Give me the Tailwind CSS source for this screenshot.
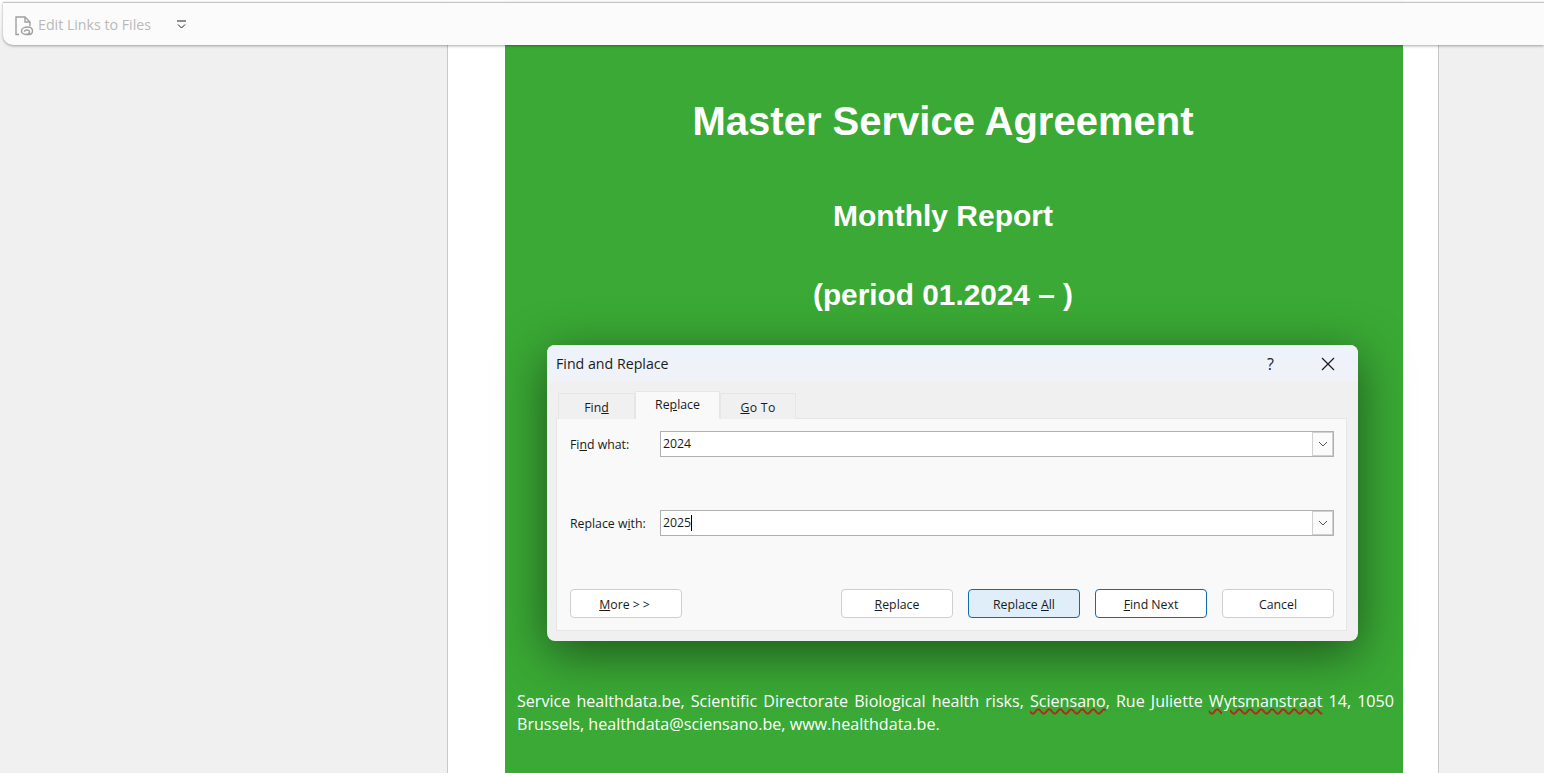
<!DOCTYPE html>
<html lang="en">
<head>
    <meta charset="UTF-8">
    <title>Find and Replace</title>
    <script src="https://cdn.jsdelivr.net/npm/@tailwindcss/browser@4"></script>
</head>
<body class="bg-[#f0f0f0] overflow-hidden font-['Open_Sans',sans-serif]">
    <div class="relative h-[773px] w-[1544px] overflow-hidden">
        <!-- Document page -->
        <div class="absolute left-[447px] top-0 h-full w-[992px] bg-white border-x border-[#c8c8c8]">
            <div class="ml-[57px] w-[898px] h-full bg-[#3aa935] pt-[45px] pr-[22px]">
                <div class="font-['Liberation_Sans',sans-serif] font-bold text-white text-center">
                    <h1 class="text-[40px] leading-[46px] mt-[53px]">Master Service Agreement</h1>
                    <h2 class="text-[30px] leading-[34px] mt-[55px]">Monthly Report</h2>
                    <h2 class="text-[29.8px] leading-[34px] mt-[45px]">(period 01.2024 – )</h2>
                </div>
                <p class="mt-[378px] ml-[12px] mr-[-13px] text-white text-[16.1px] leading-[23px] text-justify">
                    Service healthdata.be, Scientific Directorate Biological health risks, <span class="underline decoration-wavy decoration-[#b8281a] decoration-[1.5px]">Sciensano</span>, Rue Juliette <span class="underline decoration-wavy decoration-[#b8281a] decoration-[1.5px]">Wytsmanstraat</span> 14, 1050 Brussels, healthdata@sciensano.be, www.healthdata.be.
                </p>
            </div>
        </div>

        <!-- Toolbar -->
        <div class="absolute left-0 top-0 w-full pt-[2px] bg-gradient-to-b from-white to-white/0">
            <div class="h-[43px] ml-[3px] bg-[#fbfbfb] border-t border-[#c4c4c4] rounded-bl-[10px] shadow-[0_1px_3px_rgba(0,0,0,0.35)] flex items-center pl-[12px]">
                <svg class="w-[19px] h-[20px] mt-[3px]" viewBox="0 0 19 20" fill="none" stroke="#a0a0a0" stroke-width="1.4">
                    <path d="M4 18.500H1V1H10L15 6V10"/>
                    <path d="M10 1V6H15"/>
                    <path d="M10 18.500h3.500c2.500 0 4-1.500 4-3.500 0-2.500-2-4-5-4-3 0-6 1.500-6 4 0 2 2 3.500 4.500 3.500 2 0 3.500-1 3.500-2.500 0-1.200-1-2-2.500-2-1.500 0-2.500.8-2.500 1.800"/>
                </svg>
                <span class="ml-[4px] pt-[1px] text-[14.2px] text-[#b9b9b9]">Edit Links to Files</span>
                <svg class="ml-[25px] w-[11px] h-[10px] mt-[1px]" viewBox="0 0 11 10" fill="none" stroke="#222" stroke-width="1">
                    <path d="M1 1H10"/>
                    <path d="M2 4.500L5.500 8L9 4.500"/>
                </svg>
            </div>
        </div>

        <!-- Find and Replace dialog -->
        <div class="absolute left-[547px] top-[345px] w-[811px] h-[296px] bg-[#f0f0f0] rounded-[8px] shadow-[0_12px_50px_rgba(0,0,0,0.5)] flex flex-col text-[12.3px] text-[#1a1a1a]">
            <div class="h-[37px] shrink-0 rounded-t-[8px] bg-gradient-to-b from-[#eef2fb] to-[#f0f2f8] flex items-center pl-[9px]">
                <span class="text-[14.2px] grow">Find and Replace</span>
                <span class="text-[16px] mr-[47px]">?</span>
                <svg class="w-[14px] h-[14px] mr-[23px]" viewBox="0 0 14 14" fill="none" stroke="#1a1a1a" stroke-width="1.2">
                    <path d="M1 1L13 13M13 1L1 13"/>
                </svg>
            </div>

            <!-- Tabs -->
            <div class="flex items-end h-[37px] shrink-0 pl-[11px] relative z-10">
                <div class="w-[77px] h-[26px] bg-[#f0f0f0] border border-b-0 border-[#e6e6e6] flex items-center justify-center pt-[3px]"><span>Fin<u>d</u></span></div>
                <div class="w-[85px] h-[28px] bg-[#f9f9f9] border border-b-0 border-[#e6e6e6] flex items-center justify-center"><span>Re<u>p</u>lace</span></div>
                <div class="w-[76px] h-[26px] bg-[#f0f0f0] border border-b-0 border-[#e6e6e6] flex items-center justify-center pt-[3px]"><span class="tracking-[0.3px]"><u>G</u>o To</span></div>
            </div>

            <!-- Panel -->
            <div class="ml-[9px] mt-[-1px] w-[791px] h-[213px] bg-[#f9f9f9] border border-[#e6e6e6] flex flex-col pl-[13px] pr-[12px] pt-[12px]">
                <div class="flex items-center h-[26px]">
                    <label class="w-[90px] shrink-0 pt-[2px]">Fi<u>n</u>d what:</label>
                    <div class="w-[674px] h-[26px] bg-white border border-[#b0b0b0] flex items-center justify-between pl-[2px]">
                        <span>2024</span>
                        <div class="w-[21px] h-full border border-[#d0d0d0] bg-[#fbfbfb] flex items-center justify-center">
                            <svg class="w-[10px] h-[6px]" viewBox="0 0 10 6" fill="none" stroke="#555" stroke-width="1"><path d="M1 1L5 5L9 1"/></svg>
                        </div>
                    </div>
                </div>
                <div class="flex items-center h-[26px] mt-[53px]">
                    <label class="w-[90px] shrink-0 pt-[2px]">Replace w<u>i</u>th:</label>
                    <div class="w-[674px] h-[26px] bg-white border border-[#b0b0b0] flex items-center justify-between pl-[2px]">
                        <span class="border-r border-black leading-[16px]">2025</span>
                        <div class="w-[21px] h-full border border-[#d0d0d0] bg-[#fbfbfb] flex items-center justify-center">
                            <svg class="w-[10px] h-[6px]" viewBox="0 0 10 6" fill="none" stroke="#555" stroke-width="1"><path d="M1 1L5 5L9 1"/></svg>
                        </div>
                    </div>
                </div>
                <div class="flex mt-[53px]">
                    <button class="w-[112px] h-[29px] pt-[3px] bg-white border border-[#cfcfcf] rounded-[4px]"><u>M</u>ore <span class="tracking-[3px]">&gt;&gt;</span></button>
                    <div class="grow flex justify-end gap-[15px]">
                        <button class="w-[112px] h-[29px] pt-[3px] bg-white border border-[#cfcfcf] rounded-[4px]"><u>R</u>eplace</button>
                        <button class="w-[112px] h-[29px] pt-[3px] bg-[#e0eef9] border border-[#0f6cab] rounded-[4px]">Replace <u>A</u>ll</button>
                        <button class="w-[112px] h-[29px] pt-[3px] bg-white border border-[#0f6cab] rounded-[4px]"><u>F</u>ind Next</button>
                        <button class="w-[112px] h-[29px] pt-[3px] bg-white border border-[#cfcfcf] rounded-[4px]">Cancel</button>
                    </div>
                </div>
            </div>
        </div>
    </div>
</body>
</html>
